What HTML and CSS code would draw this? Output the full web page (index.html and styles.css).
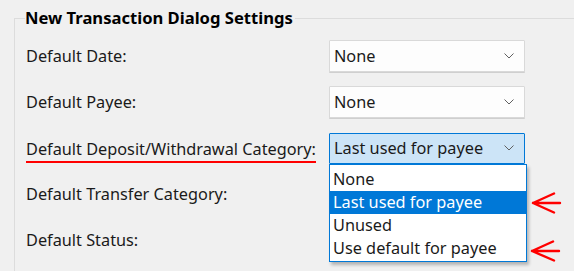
FILE: index.html
```html
<!DOCTYPE html>
<html>
<head>
<meta charset="utf-8">
<link rel="stylesheet" href="styles.css">
</head>
<body>
<div class="page">
  <fieldset class="group">
    <legend class="title">New Transaction Dialog Settings</legend>
    <div class="rows">
      <div class="row">
        <span class="label">Default Date:</span>
        <div class="combo"><span class="value">None</span><svg class="chev" viewBox="0 0 10 6" width="10" height="6"><path d="M0.5 0.5 L5 5 L9.5 0.5" fill="none" stroke="#606060" stroke-width="1"/></svg></div>
      </div>
      <div class="row">
        <span class="label">Default Payee:</span>
        <div class="combo"><span class="value">None</span><svg class="chev" viewBox="0 0 10 6" width="10" height="6"><path d="M0.5 0.5 L5 5 L9.5 0.5" fill="none" stroke="#606060" stroke-width="1"/></svg></div>
      </div>
      <div class="row">
        <span class="label marked">Default Deposit/Withdrawal Category:</span>
        <div class="combo-holder">
          <div class="combo focused"><span class="value">Last used for payee</span><svg class="chev" viewBox="0 0 10 6" width="10" height="6"><path d="M0.5 0.5 L5 5 L9.5 0.5" fill="none" stroke="#606060" stroke-width="1"/></svg></div>
          <ul class="dropdown">
            <li class="item">None</li>
            <li class="item selected">Last used for payee</li>
            <li class="item">Unused</li>
            <li class="item">Use default for payee</li>
          </ul>
        </div>
      </div>
      <div class="row">
        <span class="label">Default Transfer Category:</span>
        <div class="combo"></div>
      </div>
      <div class="row">
        <span class="label">Default Status:</span>
        <div class="combo"></div>
      </div>
    </div>
  </fieldset>
  <svg class="arrow arrow-1" viewBox="0 0 32 22" width="32" height="22"><path d="M2 11 L29 11 M2 11 L23 1.5 M2 11 L23 20.5" fill="none" stroke="#ff0000" stroke-width="2.4" stroke-linecap="round"/></svg>
  <svg class="arrow arrow-2" viewBox="0 0 32 22" width="32" height="22"><path d="M2 11 L29 11 M2 11 L23 1.5 M2 11 L24 20.5" fill="none" stroke="#ff0000" stroke-width="2.4" stroke-linecap="round"/></svg>
</div>
</body>
</html>
```
FILE: styles.css
```css
html, body {
  margin: 0;
  padding: 0;
  background: #f0f0f0;
}
.page {
  position: relative;
  width: 574px;
  height: 271px;
  overflow: hidden;
  font-family: "Noto Sans", "Open Sans", sans-serif;
  font-size: 16.3px;
  color: #1a1a1a;
}
.group {
  margin: 8px 0 0 14px;
  padding: 0 0 0 11px;
  border: 0;
  border-top: 1px solid #dcdcdc;
  border-left: 1px solid #dcdcdc;
  min-width: 0;
  height: 270px;
}
.title {
  font-weight: bold;
  font-size: 16.6px;
  color: #000;
  padding: 0 2px 0 0;
  margin-left: -1px;
  line-height: 20px;
}
.rows {
  display: flex;
  flex-direction: column;
  margin-top: 5px;
}
.row {
  display: grid;
  grid-template-columns: 303px 196px;
  align-items: center;
  height: 46px;
}
.label {
  line-height: 20px;
}
.marked {
  justify-self: start;
  border-bottom: 2px solid #ff0000;
  padding-bottom: 2px;
  margin-top: 6px;
}
.combo {
  box-sizing: border-box;
  height: 32px;
  background: #fdfdfd;
  border: 1px solid #d9d9d9;
  box-shadow: 0 1px 0 #cfcfcf;
  border-radius: 1px;
  display: flex;
  align-items: center;
  justify-content: space-between;
  padding: 0 10px 0 4px;
}
.combo.focused {
  background: #cce4f7;
  border-color: #0078d7;
  box-shadow: none;
  height: 31px;
}
.chev {
  display: block;
}
.combo-holder {
  position: relative;
  z-index: 2;
}
.dropdown {
  position: absolute;
  left: 0;
  top: 31px;
  width: 198px;
  box-sizing: border-box;
  margin: 0;
  padding: 3px 0 1px;
  list-style: none;
  background: #fff;
  border: 1px solid #0078d7;
  box-shadow: 2px 3px 3px rgba(0,0,0,0.25);
}
.item {
  height: 23px;
  line-height: 23px;
  padding-left: 3px;
}
.item.selected {
  background: #0078d7;
  color: #fff;
}
.arrow {
  position: absolute;
  display: block;
}
.arrow-1 {
  left: 531px;
  top: 192px;
}
.arrow-2 {
  left: 530px;
  top: 240px;
}
```
